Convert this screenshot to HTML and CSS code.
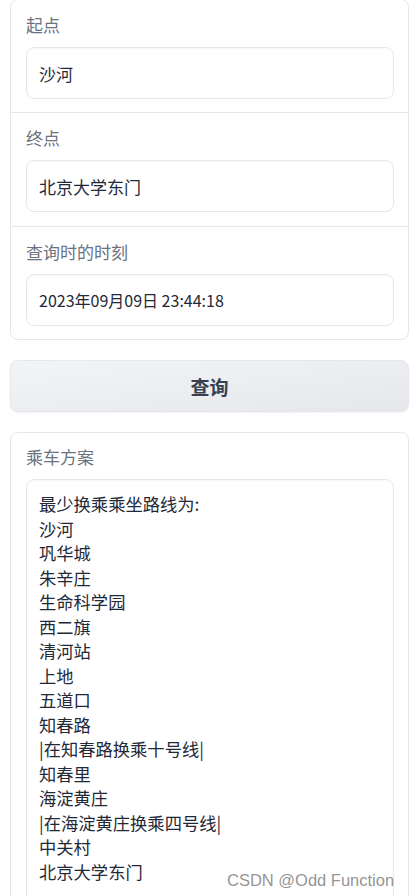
FILE: index.html
```html
<!DOCTYPE html>
<html lang="zh">
<head>
<meta charset="utf-8">
<title>地铁查询</title>
<link rel="stylesheet" href="styles.css">
</head>
<body>
<div class="page">
  <div class="card form-card">
    <div class="field">
      <div class="label">起点</div>
      <div class="input">沙河</div>
    </div>
    <div class="field">
      <div class="label">终点</div>
      <div class="input">北京大学东门</div>
    </div>
    <div class="field">
      <div class="label">查询时的时刻</div>
      <div class="input date">2023年09月09日 23:44:18</div>
    </div>
  </div>

  <button class="btn">查询</button>

  <div class="card out-card">
    <div class="field">
      <div class="label">乘车方案</div>
      <div class="textarea">最少换乘乘坐路线为:
沙河
巩华城
朱辛庄
生命科学园
西二旗
清河站
上地
五道口
知春路
|在知春路换乘十号线|
知春里
海淀黄庄
|在海淀黄庄换乘四号线|
中关村
北京大学东门
</div>
    </div>
  </div>
</div>
<div class="watermark">CSDN @Odd Function</div>
</body>
</html>
```

FILE: styles.css
```css
html, body {
  margin: 0;
  padding: 0;
  background: #ffffff;
}
body {
  font-family: "Noto Sans CJK SC", "Noto Sans", sans-serif;
  color: #1f2937;
  overflow: hidden;
  height: 896px;
  position: relative;
}
.page {
  margin: -1px 0 0 10px;
  width: 399px;
  display: flex;
  flex-direction: column;
  gap: 20px;
}
.card {
  border: 1px solid #e5e7eb;
  border-radius: 8px;
  background: #fff;
  overflow: hidden;
}
.field {
  padding: 13px 14px 13px 15px;
  display: flex;
  flex-direction: column;
  gap: 10px;
}
.form-card .field + .field {
  border-top: 1px solid #e5e7eb;
}
.form-card .field:nth-child(2) {
  padding-bottom: 14px;
}
.label {
  font-size: 17px;
  line-height: 24px;
  color: #6b7280;
}
.input {
  height: 52px;
  box-sizing: border-box;
  border: 1px solid #e5e7eb;
  border-radius: 8px;
  box-shadow: inset 0 1px 2px rgba(0,0,0,0.04);
  padding: 0 12px;
  display: flex;
  align-items: center;
  font-size: 17px;
  color: #1f2937;
}
.input.date {
  font-size: 16px;
}
.btn {
  height: 52px;
  border: 1px solid #e5e7eb;
  border-radius: 8px;
  background: linear-gradient(to bottom right, #f3f4f6, #e5e7eb);
  font-family: "Noto Sans CJK SC", sans-serif;
  font-size: 19px;
  font-weight: 700;
  color: #374151;
  box-shadow: 0 1px 2px rgba(0,0,0,0.05);
  padding: 0;
}
.out-card .field {
  padding-top: 12px;
}
.textarea {
  border: 1px solid #e5e7eb;
  border-radius: 8px;
  box-shadow: inset 0 1px 2px rgba(0,0,0,0.04);
  padding: 12px 12px 40px;
  font-size: 17.3px;
  line-height: 24.5px;
  white-space: pre-wrap;
  color: #1f2937;
}
.watermark {
  position: absolute;
  left: 227px;
  top: 869px;
  font-family: "Liberation Sans", Arial, sans-serif;
  font-size: 16.5px;
  line-height: 22px;
  color: rgba(128,128,128,0.85);
}
```
